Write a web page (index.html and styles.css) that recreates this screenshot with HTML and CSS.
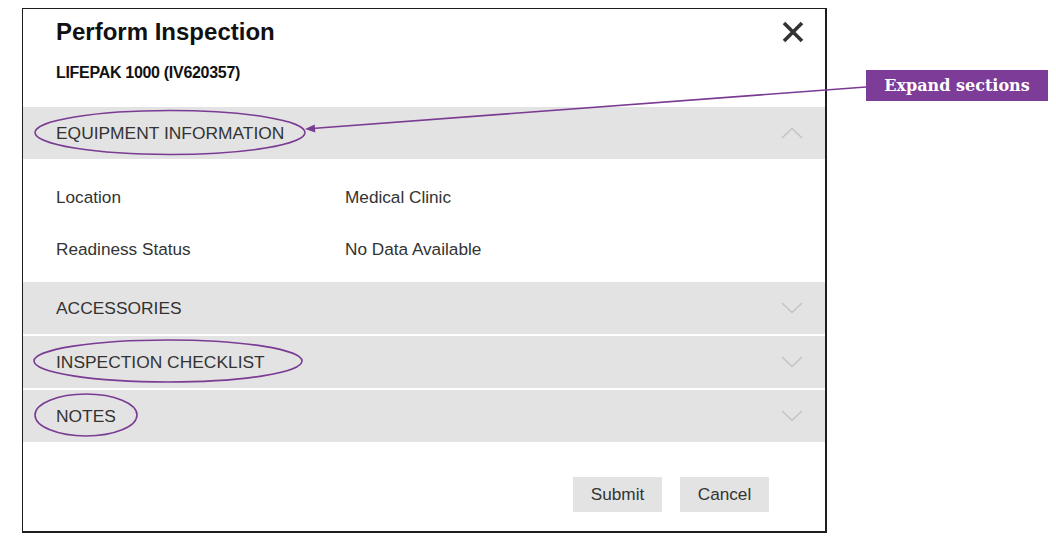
FILE: index.html
```html
<!DOCTYPE html>
<html lang="en">
<head>
<meta charset="utf-8">
<title>Perform Inspection</title>
<link rel="stylesheet" href="styles.css">
</head>
<body>
<div class="page">
  <div class="dialog">
    <div class="dialog-head">
      <div class="title-block">
        <h1 class="title">Perform Inspection</h1>
        <div class="subtitle">LIFEPAK 1000 (IV620357)</div>
      </div>
      <svg class="close" width="22" height="22" viewBox="0 0 22 22" aria-label="Close">
        <path d="M2 2 L20 20 M20 2 L2 20" stroke="#333" stroke-width="3.6" fill="none"/>
      </svg>
    </div>

    <div class="section-head">
      <span>EQUIPMENT INFORMATION</span>
      <svg class="chev" width="22" height="12" viewBox="0 0 22 12"><path d="M1 11 L11 1.5 L21 11" stroke="#c4c4c4" stroke-width="1.6" fill="none"/></svg>
    </div>
    <div class="section-body">
      <div class="row"><span class="label">Location</span><span class="value">Medical Clinic</span></div>
      <div class="row"><span class="label">Readiness Status</span><span class="value">No Data Available</span></div>
    </div>
    <div class="section-head">
      <span>ACCESSORIES</span>
      <svg class="chev" width="22" height="12" viewBox="0 0 22 12"><path d="M1 1 L11 10.5 L21 1" stroke="#c4c4c4" stroke-width="1.6" fill="none"/></svg>
    </div>
    <div class="section-head gap">
      <span>INSPECTION CHECKLIST</span>
      <svg class="chev" width="22" height="12" viewBox="0 0 22 12"><path d="M1 1 L11 10.5 L21 1" stroke="#c4c4c4" stroke-width="1.6" fill="none"/></svg>
    </div>
    <div class="section-head gap">
      <span>NOTES</span>
      <svg class="chev" width="22" height="12" viewBox="0 0 22 12"><path d="M1 1 L11 10.5 L21 1" stroke="#c4c4c4" stroke-width="1.6" fill="none"/></svg>
    </div>

    <div class="dialog-foot">
      <button class="btn">Submit</button>
      <button class="btn">Cancel</button>
    </div>
  </div>

  <svg class="annot" width="1056" height="557" viewBox="0 0 1056 557">
    <g stroke="#7a3b93" stroke-width="1.6" fill="none">
      <ellipse cx="170" cy="132.5" rx="135" ry="22"/>
      <ellipse cx="168" cy="361" rx="134" ry="21"/>
      <ellipse cx="86" cy="415" rx="51" ry="21"/>
      <line x1="866" y1="87" x2="312" y2="128.5"/>
    </g>
    <polygon points="305,129 315.3,132.6 314.7,124.4" fill="#7a3b93"/>
  </svg>
  <div class="callout">Expand sections</div>
</div>
</body>
</html>
```

FILE: styles.css
```css
html, body {
  margin: 0;
  padding: 0;
  background: #fff;
}

body {
  font-family: "Liberation Sans", Arial, sans-serif;
  color: #333;
}

.page {
  position: relative;
  width: 1056px;
  height: 557px;
  box-sizing: border-box;
  padding: 8px 0 0 22px;
  overflow: hidden;
}

.dialog {
  width: 805px;
  height: 525px;
  box-sizing: border-box;
  border: 1px solid #1e1e1e;
  border-right-width: 2px;
  border-bottom-width: 2px;
  background: #fff;
  display: flex;
  flex-direction: column;
}

.dialog-head {
  height: 98px;
  flex: none;
  display: flex;
  justify-content: space-between;
  align-items: flex-start;
  padding: 0 21px 0 33px;
}

.title-block {
  padding-top: 9px;
}

.title {
  margin: 0;
  font-size: 24px;
  line-height: 28px;
  font-weight: bold;
  color: #111;
}

.subtitle {
  margin-top: 17px;
  font-size: 16px;
  line-height: 20px;
  font-weight: bold;
  letter-spacing: -0.3px;
  color: #111;
}

.close {
  margin-top: 12px;
  display: block;
}

.section-head {
  height: 52px;
  flex: none;
  background: #e3e3e3;
  display: flex;
  align-items: center;
  justify-content: space-between;
  padding: 0 22px 0 33px;
  font-size: 17.4px;
  color: #333;
}

.section-head.gap {
  margin-top: 2px;
}

.chev {
  display: block;
}

.section-body {
  padding: 12px 33px 7px;
}

.row {
  height: 52px;
  display: flex;
  align-items: center;
  font-size: 17.2px;
  color: #333;
}

.label {
  width: 289px;
}

.dialog-foot {
  display: flex;
  justify-content: flex-end;
  gap: 18px;
  padding: 35px 56px 0 0;
}

.btn {
  width: 89px;
  height: 35px;
  border: none;
  background: #e3e3e3;
  font-family: "Liberation Sans", Arial, sans-serif;
  font-size: 17.2px;
  color: #333;
  padding: 0;
}

.annot {
  position: absolute;
  left: 0;
  top: 0;
  pointer-events: none;
}

.callout {
  position: absolute;
  left: 866px;
  top: 70px;
  width: 182px;
  height: 31px;
  background: #7d3c98;
  color: #fff;
  font-family: "DejaVu Serif", "Liberation Serif", serif;
  font-weight: bold;
  font-size: 16px;
  line-height: 31px;
  text-align: center;
}
```
